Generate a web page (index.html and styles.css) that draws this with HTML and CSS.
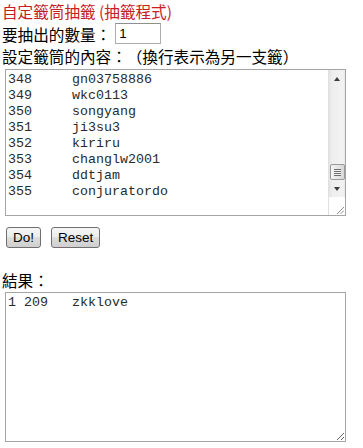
FILE: index.html
```html
<!DOCTYPE html>
<html lang="zh-Hant">

<head>
    <meta charset="UTF-8">
    <meta name="viewport" content="width=device-width, initial-scale=1.0">
    <title>自定籤筒抽籤</title>
    <link rel="stylesheet" href="styles.css">
</head>

<body>
    <div class="title">自定籤筒抽籤 (抽籤程式)</div>
    <div class="count-row">
        <span>要抽出的數量：</span>
        <input type="text" class="count" value="1">
    </div>
    <div class="label">設定籤筒的內容：（換行表示為另一支籤）</div>

    <div class="lots-box">
        <textarea class="lots" spellcheck="false">348	gn03758886
349	wkc0113
350	songyang
351	ji3su3
352	kiriru
353	changlw2001
354	ddtjam
355	conjuratordo
</textarea>
        <!-- classic scrollbar, scrolled to the end of the list -->
        <div class="scrollbar">
            <div class="sb-btn"><span class="arrow-up"></span></div>
            <div class="sb-track">
                <div class="sb-thumb"><span class="grip"></span></div>
            </div>
            <div class="sb-btn"><span class="arrow-down"></span></div>
            <div class="sb-corner">
                <svg width="8" height="8" viewBox="0 0 8 8">
                    <line x1="1" y1="8" x2="8" y2="1" stroke="#8a8a8a" stroke-width="1" />
                    <line x1="4.5" y1="8" x2="8" y2="4.5" stroke="#8a8a8a" stroke-width="1" />
                </svg>
            </div>
        </div>
    </div>

    <div class="buttons">
        <button type="button">Do!</button>
        <button type="button">Reset</button>
    </div>

    <div class="label result-label">結果：</div>
    <textarea class="result" spellcheck="false">1 209	zkklove</textarea>
</body>

</html>
```

FILE: styles.css
```css
body {
    margin: 0;
    padding: 0 0 0 2px;
    background-color: #ffffff;
    color: #000;
    font-family: "Noto Sans CJK TC", "Liberation Sans", sans-serif;
    font-size: 15.6px;
    line-height: 22px;
    text-spacing-trim: space-all;
}

.title {
    color: #c8201e;
}

.count-row {
    display: flex;
    align-items: center;
    height: 23px;
}

.count {
    width: 46px;
    height: 21px;
    margin: 0 0 0 4px;
    padding: 0 3px;
    box-sizing: border-box;
    border: 1px solid #abadb3;
    border-top-color: #8e8f8f;
    font-family: "Liberation Sans", Arial, sans-serif;
    font-size: 13.33px;
    color: #000;
    outline: none;
}

.lots-box {
    display: flex;
    width: 341px;
    height: 147px;
    margin: 2px 0 0 3px;
    box-sizing: border-box;
    border: 1px solid #a5a5a5;
}

textarea {
    margin: 0;
    padding: 2px 2px;
    box-sizing: border-box;
    font-family: "Liberation Mono", "Courier New", monospace;
    font-size: 13.33px;
    line-height: 16px;
    color: #2a2a2a;
    tab-size: 8;
    outline: none;
}

.lots {
    flex: 1;
    height: 100%;
    border: none;
    resize: none;
    overflow: hidden;
}

.scrollbar {
    display: flex;
    flex-direction: column;
    width: 17px;
    background: linear-gradient(to right, #e3e3e3, #eeeeee 3px, #f2f2f2 14px, #e9e9e9);
    border-left: 1px solid #e0e0e0;
    box-sizing: border-box;
}

.sb-btn {
    height: 17px;
    display: flex;
    align-items: center;
    justify-content: center;
}

.arrow-up {
    border-left: 3.5px solid transparent;
    border-right: 3.5px solid transparent;
    border-bottom: 4px solid #3c3c3c;
}

.arrow-down {
    border-left: 3.5px solid transparent;
    border-right: 3.5px solid transparent;
    border-top: 4px solid #3c3c3c;
}

.sb-track {
    flex: 1;
    display: flex;
    flex-direction: column;
    justify-content: flex-end;
    align-items: center;
}

.sb-thumb {
    width: 15px;
    height: 16px;
    box-sizing: border-box;
    border: 1px solid #9a9a9a;
    border-radius: 2px;
    background: linear-gradient(to right, #f4f4f4, #e6e6e6 50%, #d9d9d9);
    display: flex;
    align-items: center;
    justify-content: center;
}

.grip {
    width: 7px;
    height: 7px;
    background: repeating-linear-gradient(to bottom, #6e6e6e 0 1px, #f2f2f2 1px 2px);
}

.sb-corner {
    height: 17px;
    background-color: #ffffff;
    display: flex;
    align-items: flex-end;
    justify-content: flex-end;
    padding: 0 1px 1px 0;
}

.buttons {
    display: flex;
    gap: 10px;
    margin: 11px 0 0 4px;
}

button {
    height: 21px;
    padding: 0 6px;
    border: 1px solid #707070;
    border-radius: 3px;
    background: linear-gradient(#f6f6f6, #ebebeb 50%, #dddddd 50%, #cfcfcf);
    font-family: "Liberation Sans", Arial, sans-serif;
    font-size: 13.5px;
    color: #000;
    cursor: pointer;
}

.result-label {
    margin-top: 21px;
}

.result {
    display: block;
    width: 341px;
    height: 150px;
    margin: 1px 0 0 3px;
    border: 1px solid #a5a5a5;
    resize: both;
    overflow: hidden;
}
```
